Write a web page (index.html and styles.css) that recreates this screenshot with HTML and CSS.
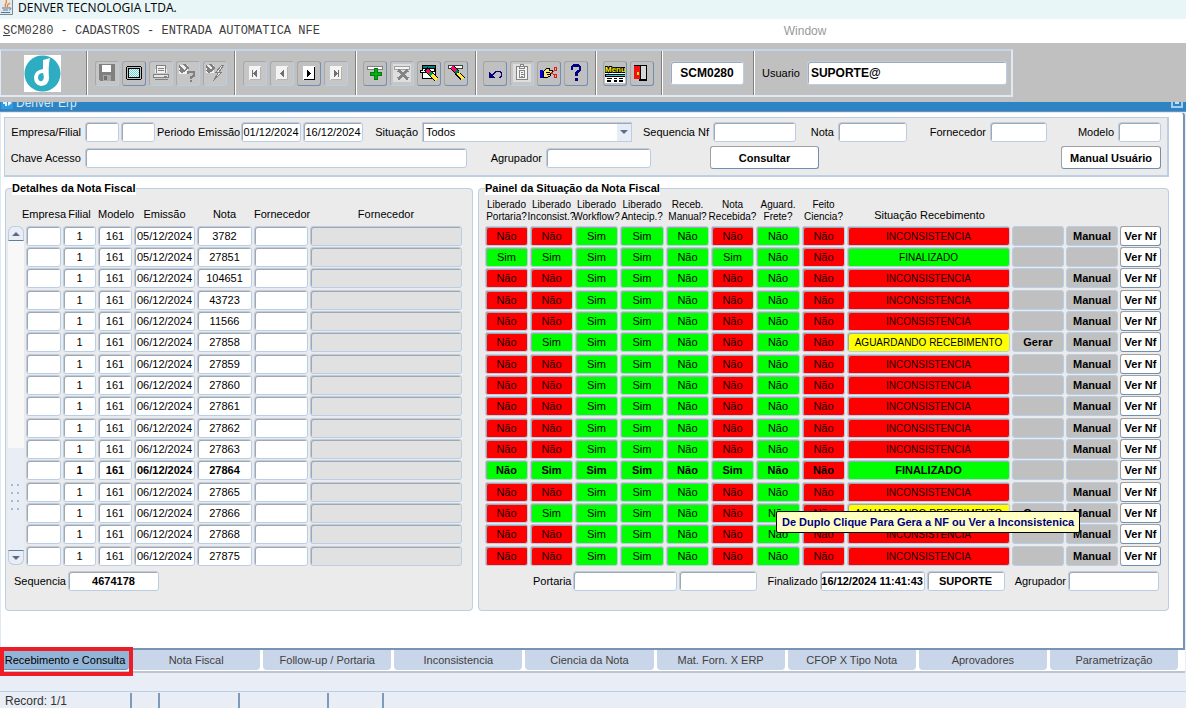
FILE: index.html
```html
<!DOCTYPE html>
<html lang="pt-BR">
<head>
<meta charset="utf-8">
<title>DENVER TECNOLOGIA LTDA.</title>
<link rel="stylesheet" href="styles.css">
</head>
<body>
<header class="titlebar">
  <svg width="14" height="15" viewBox="0 0 14 15" aria-hidden="true">
    <path d="M0 0h12v14H0z" fill="#e4e8ec"/><path d="M12.500 0v14.500H0" fill="none" stroke="#7d8894"/>
    <path d="M6 7C3 5 8 3 6 0M8 7c-2-2 1-3 2-4" fill="none" stroke="#e8862a" stroke-width="1.300"/>
    <path d="M2 8h7M3 10h5M1 12.500h9M9 8c3-1 2 2 0 2" fill="none" stroke="#4c78a4"/>
  </svg>
  <span>DENVER TECNOLOGIA LTDA.</span>
</header>
<nav class="menubar">
  <span class="program"><u>S</u>CM0280 - CADASTROS - ENTRADA AUTOMATICA NFE</span>
  <span class="window-menu">Window</span>
</nav>

<div class="toolbar-area">
<div class="toolbar" role="toolbar" aria-label="Ferramentas">
  <div class="section logo">
    <svg width="37" height="37" viewBox="0 0 37 37" aria-label="Denver">
      <path fill="#fff" d="M0 0h37v37H0z"/><circle cx="18.500" cy="18.500" r="18" fill="#2eacc1"/>
      <path fill="#fff" d="M19 5l7-2q-2 9-1 20 0 7-8 8-7-1-7-9 1-7 9-8z"/>
      <path fill="#2eacc1" d="M19 18q-5 0-5 5 1 4 4 3 3-2 1-8z"/>
    </svg>
  </div>
  <div class="section icons">
    <button type="button" class="off" aria-label="Salvar"><svg viewBox="0 0 18 18"><path fill="#808080" d="M1 0h16v17H2l-1-1z"/><path fill="#fff" d="M4 1h9v7H4z"/><path fill="#a8a8a8" d="M5 11h8v6H5z"/><path fill="#707070" d="M6 12h3v4H6z"/></svg></button>
    <button type="button" aria-label="Tela"><svg viewBox="0 0 18 18"><path fill="#000" d="M2 2h14v1h1v12h-1v1H2v-1H1V3h1z"/><path fill="#c0c0c0" d="M2 3h14v12H2z"/><path fill="#000" d="M3 4h12v10H3z"/><path fill="#fff" d="M4 5h10v8H4z"/><path stroke="#60dada" stroke-dasharray="1 1" d="M4 5.500h10M5 6.500h9M4 7.500h10M5 8.500h9M4 9.500h10M5 10.500h9M4 11.500h10M5 12.500h9"/></svg></button>
    <button type="button" class="off" aria-label="Imprimir"><svg viewBox="0 0 18 18"><path fill="#f2f2f2" d="M4 1h10l1 8H3z"/><path stroke="#808080" fill="none" d="M4.500 9V1.500h9V9M6 4.500h6M6 6.500h6M1.500 10.500h15v3h-15zM2.500 15.500h13"/><path fill="#e6e6e6" d="M2 11h14v2H2z"/><path stroke="#808080" d="M12 12.500h3"/></svg></button>
    <button type="button" class="off" aria-label="Entrar consulta"><svg viewBox="0 0 18 18"><path fill="#f0f0f0" d="M0 1h9v9H0z"/><path stroke="#808080" fill="none" stroke-width="1.500" d="M0 2l5 5 4-3-4-4M1 6l3 3"/><path fill="none" stroke="#808080" stroke-width="2" d="M9 10V8h6v4l-3 1v2m0 1v2"/></svg></button>
    <button type="button" class="off" aria-label="Executar consulta"><svg viewBox="0 0 18 18"><path fill="#f0f0f0" d="M0 1h8v8H0z"/><path stroke="#808080" fill="none" stroke-width="1.500" d="M0 2l5 5 3-3-4-4M1 6l3 3"/><path fill="#e8e8e8" stroke="#808080" d="M15.500 1.500l-6 7h3l-5 8 8-8h-3l5-7z"/></svg></button>
  </div>
  <div class="section icons">
    <button type="button" class="off" aria-label="Primeiro"><svg viewBox="0 0 18 18"><path fill="#f4f4f4" d="M3 2h12v14H3z"/><path fill="#b4b4b4" d="M14 3h1v13H4v-1h10z"/><path fill="#707070" d="M6 6h1v7H6zM11 6v7L7 9.500z"/></svg></button>
    <button type="button" class="off" aria-label="Anterior"><svg viewBox="0 0 18 18"><path fill="#f4f4f4" d="M3 2h12v14H3z"/><path fill="#b4b4b4" d="M14 3h1v13H4v-1h10z"/><path fill="#707070" d="M11 6v7L7 9.500z"/></svg></button>
    <button type="button" aria-label="Próximo"><svg viewBox="0 0 18 18"><path fill="#fff" d="M3 2h12v14H3z"/><path fill="#000" d="M14 3h1v13H4v-1h10zM7 6v7l4-3.500z"/></svg></button>
    <button type="button" class="off" aria-label="Último"><svg viewBox="0 0 18 18"><path fill="#f4f4f4" d="M3 2h12v14H3z"/><path fill="#b4b4b4" d="M14 3h1v13H4v-1h10z"/><path fill="#707070" d="M11 6h1v7h-1zM7 6v7l4-3.500z"/></svg></button>
  </div>
  <div class="section icons tight">
    <button type="button" aria-label="Inserir"><svg viewBox="0 0 18 18"><path fill="#fff" stroke="#808080" d="M1.500 2.500h15v3h-15z"/><path fill="#067a06" d="M8 4h4v4h4v4h-4v4H8v-4H4V8h4z"/><path fill="#00b018" d="M9 5h2v4h4v2h-4v4H9v-4H5V9h4z"/></svg></button>
    <button type="button" class="off" aria-label="Excluir"><svg viewBox="0 0 18 18"><path fill="#dedede" d="M0 0h18v18H0z"/><path fill="#f4f4f4" stroke="#a0a0a0" d="M1.500 2.500h15v3h-15z"/><path stroke="#848484" stroke-width="3" d="M5 6l10 9M15 6L5 15"/></svg></button>
    <button type="button" aria-label="Limpar bloco"><svg viewBox="0 0 18 18"><path fill="#000" d="M2 1h14v5H2zM0 6h16v9H2V9H0z"/><path fill="#008080" d="M3 2h12v2H3z"/><path fill="#fff" d="M3 5h11v2H3zM1 7h5v1H1zM3 9h10v5H3zM12 8h3v5h-3z"/><path stroke="#000" stroke-width="5" d="M6 5l11 11"/><path stroke="#f01068" stroke-width="3" d="M7 6l3 3"/><path stroke="#00a030" stroke-width="3" d="M10 9l2 2"/><path stroke="#ffe840" stroke-width="3" d="M12 11l5 5"/></svg></button>
    <button type="button" aria-label="Limpar registro"><svg viewBox="0 0 18 18"><path fill="#fff" stroke="#404040" d="M1.500 1.500h14v3h-14z"/><path stroke="#000" stroke-width="5" d="M5 3l11 12"/><path stroke="#f01068" stroke-width="3" d="M5 3l4 4"/><path stroke="#008050" stroke-width="3" d="M9 7l2 2"/><path stroke="#ffe840" stroke-width="3" d="M11 9l5 6"/></svg></button>
  </div>
  <div class="section icons tight">
    <button type="button" aria-label="Desfazer"><svg viewBox="0 0 18 18"><path fill="#000080" d="M3 7v7h6l-2-2-2-2z"/><path fill="none" stroke="#000080" stroke-width="1.300" d="M6 11l4-3.500h4l1.500 2V12L13 14"/></svg></button>
    <button type="button" class="off" aria-label="Colar"><svg viewBox="0 0 18 18"><path fill="#dedede" d="M0 0h18v18H0z"/><path fill="#f4f4f4" stroke="#848484" d="M3.500 2.500h11v13h-11zM6.500 4.500v-2h1v-2h3v2h1v2zM6.500 6.500h5v7h-5z"/><path stroke="#848484" d="M8 8.500h2M8 10.500h3M8 12.500h2"/></svg></button>
    <button type="button" aria-label="Recortar"><svg viewBox="0 0 18 18"><path fill="#0000d8" d="M0 6h3v8H0z"/><path fill="#f8e878" stroke="#000" d="M3.500 7.500l3-3h3v2h3v3h-2v2l-3 2h-4zM10 8.500H6M11 10.500H7"/><path fill="none" stroke="#e81818" d="M11 9.500l3-2.500m-3 1l3 3M14.500 3.500h2v3h-2zM14.500 10.500h2v3h-2z"/></svg></button>
    <button type="button" aria-label="Ajuda"><svg viewBox="0 0 18 18"><path fill="none" stroke="#000080" stroke-width="2.500" d="M5 6V3l2-1.500h4L13 3v3L9.500 9v3"/><path fill="#000080" d="M8 14h3v3H8z"/></svg></button>
  </div>
  <div class="section icons tight">
    <button type="button" aria-label="Menu"><svg width="20" height="20" viewBox="0 0 20 20"><path fill="#fff" d="M0 10h20v10H0z"/><path fill="#10d8e8" stroke="#000" d="M0 11.500h20v2H0z"/><text class="menu-word" x="0" y="9">Menu</text><path stroke="#000" stroke-width="1.500" d="M2 15.500h5M9 15.500h3M14 15.500h4M2 18h4M9 18h3M14 18h4"/></svg></button>
    <button type="button" aria-label="Sair"><svg viewBox="0 0 18 18"><path fill="#000" d="M1 1h13v16H6v-2H1z"/><path fill="#d8d8d8" d="M8 2h5v13H8z"/><path fill="#f01010" d="M1 2h6v13H1z"/><path fill="#ffe800" d="M4 8h2v3H4z"/></svg></button>
  </div>
  <div class="section program-code"><input class="field big center" value="SCM0280" aria-label="Programa"></div>
  <div class="section user"><label for="usuario">Usuario</label><input class="field big" id="usuario" value="SUPORTE@"></div>
</div>
</div>

<div class="erp-title">
  <svg width="13" height="11" viewBox="0 0 13 11" aria-hidden="true"><path fill="#2f9be0" d="M1 0h12v11H1z"/><path fill="#e8f5ff" d="M3 3h2V1h2v7H5V6H3zM8 2l4 3-4 3z"/></svg>
  <span>Denver Erp</span>
  <svg class="restore" width="12" height="10" viewBox="0 0 12 10" aria-hidden="true"><path fill="#a8cdea" d="M0 0h12v10H0z"/><path fill="#2d84c4" d="M2 0h8v8H2z"/><path fill="#c4def2" d="M4 2h4v4H4z"/></svg>
</div>

<main class="canvas">
  <form class="filters">
    <div class="filter-row first">
      <label for="empresa">Empresa/Filial</label><input class="field" id="empresa"><input class="field" aria-label="Filial">
      <label for="inicio">Periodo Emissão</label><input class="field center" id="inicio" value="01/12/2024"><input class="field center" aria-label="Fim do periodo" value="16/12/2024">
      <label for="situacao">Situação</label><div class="combo"><select class="field" id="situacao"><option>Todos</option></select></div>
      <label for="seqnf">Sequencia Nf</label><input class="field" id="seqnf">
      <label for="nota">Nota</label><input class="field" id="nota">
      <label for="fornecedor">Fornecedor</label><input class="field" id="fornecedor">
      <label for="modelo">Modelo</label><input class="field" id="modelo">
    </div>
    <div class="filter-row second">
      <label for="chave">Chave Acesso</label><input class="field" id="chave">
      <label for="agrupador">Agrupador</label><input class="field" id="agrupador">
      <button type="button" class="action search">Consultar</button>
      <button type="button" class="action manual">Manual Usuário</button>
    </div>
  </form>

  <div class="panels">
    <fieldset>
      <legend>Detalhes da Nota Fiscal</legend>
      <div class="details">
        <div class="scrollbar" aria-hidden="true">
          <div class="arrow up"></div><div class="track"><div class="thumb"></div></div><div class="arrow down"></div>
        </div>
        <table>
          <colgroup><col class="w37"><col class="w35"><col class="w36"><col class="w63"><col class="w57"><col class="w56"><col class="w154"></colgroup>
          <thead><tr><th><div class="spill">Empresa</div></th><th>Filial</th><th>Modelo</th><th>Emissão</th><th>Nota</th><th>Fornecedor</th><th>Fornecedor</th></tr></thead>
          <tbody id="notas"></tbody>
        </table>
      </div>
      <div class="footer-row sequence"><label for="sequencia">Sequencia</label><input class="field center bold" id="sequencia" value="4674178"></div>
    </fieldset>
    <fieldset>
      <legend>Painel da Situação da Nota Fiscal</legend>
      <div class="status">
        <table>
          <colgroup><col class="w45"><col class="w45"><col class="w45"><col class="w46"><col class="w45"><col class="w45"><col class="w46"><col class="w45"><col class="w165"><col class="w54"><col class="w54"><col class="w42"></colgroup>
          <thead><tr class="small"><th>Liberado<br>Portaria?</th><th><div class="spill">Liberado<br>Inconsist.?</div></th><th><div class="spill">Liberado<br>Workflow?</div></th><th>Liberado<br>Antecip.?</th><th>Receb.<br>Manual?</th><th><div class="spill">Nota<br>Recebida?</div></th><th>Aguard.<br>Frete?</th><th>Feito<br>Ciencia?</th><th class="wide">Situação Recebimento</th><th></th><th></th><th></th></tr></thead>
          <tbody id="situacoes"></tbody>
        </table>
      </div>
      <div class="footer-row summary">
        <label for="portaria">Portaria</label><input class="field w104" id="portaria"><input class="field w78" aria-label="Usuario portaria">
        <label for="finalizado">Finalizado</label><input class="field w105 center bold" id="finalizado" value="16/12/2024 11:41:43"><input class="field w78 center bold" aria-label="Usuario finalizado" value="SUPORTE">
        <label for="agrupador2">Agrupador</label><input class="field w91" id="agrupador2">
      </div>
    </fieldset>
  </div>
</main>

<div class="tabs" role="tablist">
  <button type="button" role="tab" aria-selected="true">Recebimento e Consulta</button>
  <button type="button" role="tab">Nota Fiscal</button>
  <button type="button" role="tab">Follow-up / Portaria</button>
  <button type="button" role="tab">Inconsistencia</button>
  <button type="button" role="tab">Ciencia da Nota</button>
  <button type="button" role="tab">Mat. Forn. X ERP</button>
  <button type="button" role="tab">CFOP X Tipo Nota</button>
  <button type="button" role="tab">Aprovadores</button>
  <button type="button" role="tab">Parametrização</button>
  <div class="highlight"></div>
</div>

<footer class="statusbar"><span class="record">Record: 1/1</span><span class="s28"></span><span class="s80"></span><span class="s89"></span><span class="s55"></span></footer>
<script src="grid.js"></script>
</body>
</html>
```

FILE: styles.css
```css
* { box-sizing: border-box; }
body {
  margin: 0;
  min-height: 100vh;
  background: #e9edf5;
  color: #000;
  font: 11px/14px "Liberation Sans", Arial, sans-serif;
}
button, input, select { font: inherit; color: inherit; margin: 0; }
label { white-space: nowrap; }

.titlebar {
  display: flex;
  gap: 4px;
  height: 19px;
  background: #e8f6f8;
  font: 12px/16px "Open Sans", sans-serif;
}
.menubar {
  display: flex;
  align-items: center;
  height: 24px;
  padding-left: 3px;
  background: #fff;
}
.program { flex: 0 0 66%; color: #404040; font: 12px/16px "Liberation Mono", monospace; }
.window-menu { color: #999; font-size: 12px; }

.toolbar-area { padding: 6px 0 5px; background: #c0c0c0; }
.toolbar {
  display: flex;
  width: fit-content;
  height: 48px;
  border: 2px solid #dfe9f5;
  border-top-color: #c3d5e8;
  border-left-width: 1px;
}
.section {
  display: flex;
  align-items: center;
  border-left: 1px solid #fff;
  border-right: 1px solid #808080;
}
.section:first-child { border-left: 0; }
.section:last-child { border-right: 0; }
.logo { justify-content: center; width: 86px; padding-right: 3px; }
.icons { gap: 3px; padding: 0 7px; }
.icons.tight { padding: 0 7px 0 6px; }
.icons button {
  display: grid;
  place-items: center;
  width: 24px;
  height: 25px;
  padding: 0;
  border: 1px solid;
  border-color: #a4a4a4 #6f8fb4 #6f8fb4 #a4a4a4;
  border-radius: 3px;
  background: #c0c0c0;
}
.icons button.off { border-color: #a8a8ac #b8cfe5 #b8cfe5 #a8a8ac; background: #c6c6c6; }
.icons svg { display: block; width: 18px; height: 18px; shape-rendering: crispEdges; }
.icons svg[width="20"] { width: 20px; height: 20px; }
.menu-word {
  fill: #f8f000;
  stroke: #000;
  stroke-width: 2px;
  paint-order: stroke;
  font: bold 8px "Liberation Sans", sans-serif;
}
.program-code { width: 92px; padding: 0 9px 0 7px; }
.user { gap: 7px; padding: 0 4px 0 7px; }
.user .field { width: 200px; }

.field {
  width: 100%;
  min-width: 0;
  height: 20px;
  padding: 0 3px;
  border: 1px solid #b9cde4;
  border-radius: 3px;
  outline: 0;
  background: #fff;
  box-shadow: inset 1px 1px 0 #a3a8b0;
}
.field.big { height: 24px; font-size: 12px; font-weight: bold; }
.field.center { padding: 0; text-align: center; }
.field.bold, .current { font-weight: bold; }

.erp-title {
  display: flex;
  align-items: flex-end;
  gap: 3px;
  height: 10px;
  overflow: hidden;
  padding-right: 3px;
  border-bottom: 1px solid #6b8fb5;
  background: #2d84c4;
  color: #d3e8f8;
  font-size: 12px;
}
.erp-title span { margin-bottom: 1px; }
.erp-title svg { flex: none; margin-bottom: 2px; }
.erp-title .restore { margin-left: auto; margin-bottom: 3px; }

.canvas {
  margin-right: 1px;
  padding: 4px 14px 37px 4px;
  border: 1px solid #e0e8f2;
  border-right: 2px solid #7894b4;
  border-bottom: 2px solid #7894b4;
  border-top-right-radius: 4px;
  background: #fff;
}
.filters {
  margin-left: -1px;
  padding: 4px 6px 6px 0;
  border: 1px solid #bccfe4;
  border-right-width: 2px;
  border-bottom-width: 2px;
  background: #ebebeb;
}
.filter-row { display: grid; align-items: center; column-gap: 2px; }
.filter-row label { padding-right: 2px; text-align: right; }
.first { grid-template-columns: 78px 34px 34px 82px 60px 60px 55px 1fr 77px 83px 38px 69px 79px 57px 67px 43px; }
.second { grid-template-columns: 78px 382px 75px 105px 166px 1fr; margin-top: 4px; }
.action {
  height: 23px;
  padding: 0;
  border: 1px solid;
  border-color: #a0a0a4 #6f8fb4 #6f8fb4 #a0a0a4;
  border-radius: 3px;
  background: #fff;
  font-weight: bold;
}
.search { width: 109px; justify-self: end; }
.manual { width: 100px; justify-self: end; }
.combo { position: relative; }
.combo select { display: block; appearance: none; border-radius: 0; }
.combo::after {
  content: "";
  position: absolute;
  top: 2px;
  right: 1px;
  width: 14px;
  height: 17px;
  background: #e6edf6;
  pointer-events: none;
}
.combo::before {
  content: "";
  position: absolute;
  z-index: 1;
  top: 8px;
  right: 4px;
  border: 4px solid transparent;
  border-top-color: #5c6d84;
  border-bottom: 0;
  pointer-events: none;
}

.panels {
  display: grid;
  grid-template-columns: 468fr 691fr;
  gap: 5px;
  padding-top: 5px;
}
fieldset {
  min-width: 0;
  margin: 0;
  padding: 0 6px 19px;
  border: 1px solid #bccfe4;
  border-radius: 4px;
  background: #ebebeb;
}
legend { margin: 0; padding: 0; background: #fff; font-weight: bold; line-height: 13px; }
.details { display: grid; grid-template-columns: 16px 1fr; gap: 2px; margin: 0 2px 0 -4px; }
table { width: 100%; table-layout: fixed; border-collapse: collapse; }
th { height: 31px; padding: 0 2px 0 0; font-weight: normal; text-align: center; white-space: nowrap; }
.details th { padding-top: 6px; }
.small { font-size: 10px; line-height: 12px; }
.small .wide { padding: 8px 0 0; font-size: 11px; }
.spill { margin: 0 -4px; }
td { height: 21px; padding: 0 2px 1px 0; vertical-align: top; }
td:nth-child(12) { padding-right: 1px; }
tr:nth-child(3n) td { height: 22px; }
td .field { display: block; }
.locked { background: #e1e1e1; }
.w35 { width: 35px; } .w36 { width: 36px; } .w37 { width: 37px; }
.w42 { width: 42px; } .w45 { width: 45px; } .w46 { width: 46px; }
.w54 { width: 54px; } .w56 { width: 56px; } .w57 { width: 57px; }
.w63 { width: 63px; } .w154 { width: 154px; } .w165 { width: 165px; }

.state {
  height: 20px;
  border: 1px solid #b9cde4;
  border-radius: 3px;
  box-shadow: inset 1px 1px 0 #a3a8b0;
  line-height: 19px;
  text-align: center;
  white-space: nowrap;
}
.red { background: #f00; }
.green { background: #0f0; }
.yellow { background: #ff0; }
.situation { font-size: 10px; }
.current .situation { font-size: 11px; }
.red:not(.current *) { color: #200000; }
.cell-button {
  display: block;
  width: 100%;
  height: 20px;
  padding: 0;
  border: 1px solid #b9cde4;
  border-radius: 3px;
  background: #c0c0c0;
  font-weight: bold;
  white-space: nowrap;
}
.cell-button.view {
  border-color: #a0a0a4 #6f8fb4 #6f8fb4 #a0a0a4;
  background: #fff;
}
td.tip-anchor { position: relative; }
.tooltip {
  position: absolute;
  z-index: 2;
  top: 8px;
  left: -71px;
  padding: 3px 5px;
  border: 1px solid #000;
  border-radius: 2px;
  background: #ffffc4;
  color: #000080;
  font-weight: bold;
  white-space: nowrap;
}

.scrollbar { display: flex; flex-direction: column; padding: 31px 0 2px; }
.arrow {
  display: grid;
  place-items: center;
  height: 15px;
  border: 1px solid #b9cde4;
  background: #e9edf5;
}
.arrow::before { content: ""; border: 4px solid transparent; }
.up { border-bottom-color: #5f7ea0; border-radius: 6px 6px 0 0; }
.up::before { border-top: 0; border-bottom-color: #5c6d84; }
.down { border-top-color: #5f7ea0; border-radius: 0 0 6px 6px; }
.down::before { border-bottom: 0; border-top-color: #5c6d84; }
.track { display: flex; flex: 1; align-items: flex-end; background: #f8f8f8; }
.thumb {
  width: 100%;
  height: 33%;
  padding: 36px 3px;
  background: radial-gradient(circle at 1px 1px, #a8bcd4 1px, transparent 1px) 0 0 / 6px 8px content-box, #e9edf5;
}

.footer-row { display: flex; align-items: center; gap: 2px; margin-top: 4px; }
.sequence { padding-left: 2px; }
.sequence .field { width: 91px; }
.summary { justify-content: flex-end; padding-right: 3px; }
.summary input + label { margin-left: 8px; }
.w78 { width: 78px; } .w91 { width: 91px; } .w104 { width: 104px; } .w105 { width: 105px; }

.tabs {
  position: relative;
  display: grid;
  grid-template-columns: repeat(9, 1fr);
  gap: 3px;
  margin-right: 1px;
  padding: 0 7px 1px 1px;
  border-bottom: 2px solid #bfc5cf;
  background: #fff;
}
.tabs button {
  height: 20px;
  padding: 0;
  border: 0;
  border-radius: 0 0 4px 4px;
  background: #c9d6e9;
  color: #404040;
  white-space: nowrap;
}
.tabs button[aria-selected] { background: #92b4d6; color: #000; border-bottom: 1px solid #6b8fb5; }
.highlight {
  position: absolute;
  top: -3px;
  bottom: -5px;
  left: 0;
  width: 133px;
  border: 4px solid #ee1c24;
}
.statusbar {
  display: flex;
  margin-top: 18px;
  padding: 1px 0 0 5px;
  border-top: 1px solid #b9cde4;
  color: #333;
  font-size: 12px;
}
.statusbar span { height: 15px; border-right: 2px solid #7d9bb8; line-height: 16px; }
.statusbar .record { width: 127px; }
.s28 { width: 28px; } .s55 { width: 55px; } .s80 { width: 80px; } .s89 { width: 89px; }
```

FILE: grid.js
```js
// Flags per column: R = Não (red), G = Sim (green), N = Não (green)
const rows = [
  ["05/12/2024", "3782", "RRGGNRNR", "I"],
  ["05/12/2024", "27851", "GGGGNGNR", "F"],
  ["06/12/2024", "104651", "RRGGNRNR", "I"],
  ["06/12/2024", "43723", "RRGGNRNR", "I"],
  ["06/12/2024", "11566", "RRGGNRNR", "I"],
  ["06/12/2024", "27858", "RGGGNRNR", "A"],
  ["06/12/2024", "27859", "RRGGNRNR", "I"],
  ["06/12/2024", "27860", "RRGGNRNR", "I"],
  ["06/12/2024", "27861", "RRGGNRNR", "I"],
  ["06/12/2024", "27862", "RRGGNRNR", "I"],
  ["06/12/2024", "27863", "RRGGNRNR", "I"],
  ["06/12/2024", "27864", "NGGGNGNR", "F"],
  ["06/12/2024", "27865", "RRGGNRNR", "I"],
  ["06/12/2024", "27866", "RGGGNRNR", "A"],
  ["06/12/2024", "27868", "RRGGNRNR", "I"],
  ["06/12/2024", "27875", "RRGGNRNR", "I"]
];
const situations = {
  I: ["red", "INCONSISTENCIA"],
  F: ["green", "FINALIZADO"],
  A: ["yellow", "AGUARDANDO RECEBIMENTO"]
};
const currentRow = 11;
const tipRow = 13;
const labels = ["Empresa", "Filial", "Modelo", "Emissão", "Nota", "Fornecedor", "Nome do fornecedor"];

document.getElementById("notas").innerHTML = rows.map(([date, nota], i) => {
  const cells = ["", "1", "161", date, nota, "", ""].map((value, c) =>
    `<td><input class="field center${c === 6 ? " locked" : ""}" aria-label="${labels[c]} ${i + 1}" value="${value}"></td>`);
  return `<tr class="${i === currentRow ? "current" : ""}">${cells.join("")}</tr>`;
}).join("");

document.getElementById("situacoes").innerHTML = rows.map(([, , flags, code], i) => {
  const [color, text] = situations[code];
  const cells = [...flags].map(f =>
    `<td><div class="state ${f === "R" ? "red" : "green"}">${f === "G" ? "Sim" : "Não"}</div></td>`).join("");
  const tip = i === tipRow
    ? '<div class="tooltip" role="tooltip">De Duplo Clique Para Gera a NF ou Ver a Inconsistenica</div>' : "";
  return `<tr class="${i === currentRow ? "current" : ""}">${cells}
    <td class="${tip ? "tip-anchor" : ""}"><div class="state situation ${color}">${text}</div>${tip}</td>
    <td><button type="button" class="cell-button">${code === "A" ? "Gerar" : ""}</button></td>
    <td><button type="button" class="cell-button">${code === "F" ? "" : "Manual"}</button></td>
    <td><button type="button" class="cell-button view">Ver Nf</button></td></tr>`;
}).join("");
```
